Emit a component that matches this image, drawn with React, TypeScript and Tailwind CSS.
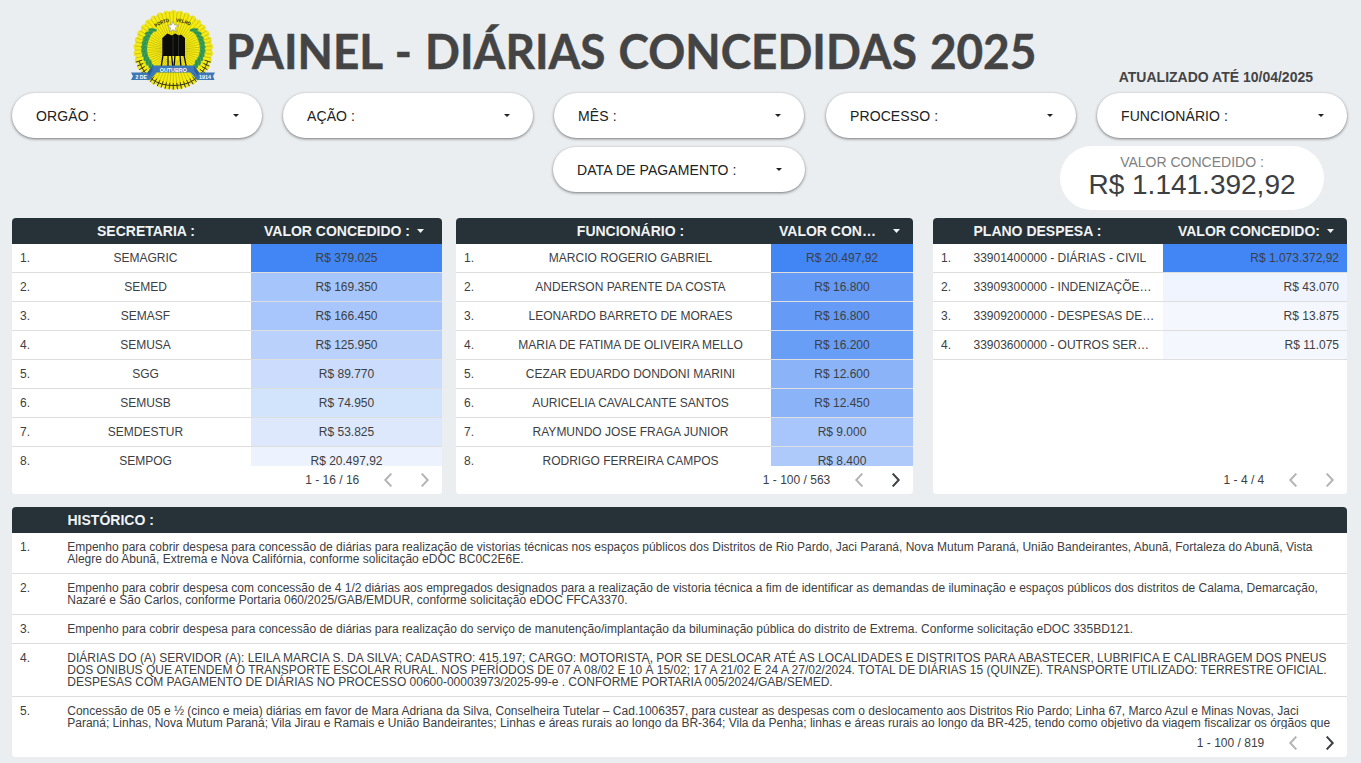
import type { ReactNode } from "react";

type Row = { name: string; value: string; tone: string };

const secretarias: Row[] = [
  { name: "SEMAGRIC", value: "R$ 379.025", tone: "bg-[#4285f4]" },
  { name: "SEMED", value: "R$ 169.350", tone: "bg-[#a6c5fa]" },
  { name: "SEMASF", value: "R$ 166.450", tone: "bg-[#a8c6fb]" },
  { name: "SEMUSA", value: "R$ 125.950", tone: "bg-[#b9d1fb]" },
  { name: "SGG", value: "R$ 89.770", tone: "bg-[#ccdcfc]" },
  { name: "SEMUSB", value: "R$ 74.950", tone: "bg-[#d2e3fc]" },
  { name: "SEMDESTUR", value: "R$ 53.825", tone: "bg-[#dee8fd]" },
  { name: "SEMPOG", value: "R$ 20.497,92", tone: "bg-[#edf3fe]" },
];

const funcionarios: Row[] = [
  { name: "MARCIO ROGERIO GABRIEL", value: "R$ 20.497,92", tone: "bg-[#4285f4]" },
  { name: "ANDERSON PARENTE DA COSTA", value: "R$ 16.800", tone: "bg-[#659bf6]" },
  { name: "LEONARDO BARRETO DE MORAES", value: "R$ 16.800", tone: "bg-[#659bf6]" },
  { name: "MARIA DE FATIMA DE OLIVEIRA MELLO", value: "R$ 16.200", tone: "bg-[#699ef6]" },
  { name: "CEZAR EDUARDO DONDONI MARINI", value: "R$ 12.600", tone: "bg-[#8ab3f8]" },
  { name: "AURICELIA CAVALCANTE SANTOS", value: "R$ 12.450", tone: "bg-[#8bb4f8]" },
  { name: "RAYMUNDO JOSE FRAGA JUNIOR", value: "R$ 9.000", tone: "bg-[#a8c6fb]" },
  { name: "RODRIGO FERREIRA CAMPOS", value: "R$ 8.400", tone: "bg-[#aecafa]" },
];

const planos: Row[] = [
  { name: "33901400000 - DIÁRIAS - CIVIL", value: "R$ 1.073.372,92", tone: "bg-[#4285f4]" },
  { name: "33909300000 - INDENIZAÇÕE…", value: "R$ 43.070", tone: "bg-[#f0f4fe]" },
  { name: "33909200000 - DESPESAS DE…", value: "R$ 13.875", tone: "bg-[#f4f8fe]" },
  { name: "33903600000 - OUTROS SER…", value: "R$ 11.075", tone: "bg-[#f4f8fe]" },
];

const historico: string[][] = [
  [
    "Empenho para cobrir despesa para concessão de diárias para realização de vistorias técnicas nos espaços públicos dos Distritos de Rio Pardo, Jaci Paraná, Nova Mutum Paraná, União Bandeirantes, Abunã, Fortaleza do Abunã, Vista",
    "Alegre do Abunã, Extrema e Nova Califórnia, conforme solicitação eDOC BC0C2E6E.",
  ],
  [
    "Empenho para cobrir despesa com concessão de 4 1/2 diárias aos empregados designados para a realização de vistoria técnica a fim de identificar as demandas de iluminação e espaços públicos dos distritos de Calama, Demarcação,",
    "Nazaré e São Carlos, conforme Portaria 060/2025/GAB/EMDUR, conforme solicitação eDOC FFCA3370.",
  ],
  [
    "Empenho para cobrir despesa para concessão de diárias para realização do serviço de manutenção/implantação da biluminação pública do distrito de Extrema. Conforme solicitação eDOC 335BD121.",
  ],
  [
    "DIÁRIAS DO (A) SERVIDOR (A): LEILA MARCIA S. DA SILVA; CADASTRO: 415.197; CARGO: MOTORISTA, POR SE DESLOCAR ATÉ AS LOCALIDADES E DISTRITOS PARA ABASTECER, LUBRIFICA E CALIBRAGEM DOS PNEUS",
    "DOS ONIBUS QUE ATENDEM O TRANSPORTE ESCOLAR RURAL. NOS PERÍODOS DE 07 A 08/02 E 10 À 15/02; 17 A 21/02 E 24 A 27/02/2024. TOTAL DE DIÁRIAS 15 (QUINZE). TRANSPORTE UTILIZADO: TERRESTRE OFICIAL.",
    "DESPESAS COM PAGAMENTO DE DIÁRIAS NO PROCESSO 00600-00003973/2025-99-e . CONFORME PORTARIA 005/2024/GAB/SEMED.",
  ],
  [
    "Concessão de 05 e ½ (cinco e meia) diárias em favor de Mara Adriana da Silva, Conselheira Tutelar – Cad.1006357, para custear as despesas com o deslocamento aos Distritos Rio Pardo; Linha 67, Marco Azul e Minas Novas, Jaci",
    "Paraná; Linhas, Nova Mutum Paraná; Vila Jirau e Ramais e União Bandeirantes; Linhas e áreas rurais ao longo da BR-364; Vila da Penha; linhas e áreas rurais ao longo da BR-425, tendo como objetivo da viagem fiscalizar os órgãos que",
  ],
];

function Caret({ size = "h-1 w-[7px]", className = "" }: { size?: string; className?: string }) {
  return (
    <svg viewBox="0 0 7 4" preserveAspectRatio="none" className={`shrink-0 ${size} ${className}`} fill="currentColor">
      <path d="M0 0h7L3.5 4z" />
    </svg>
  );
}

function Filter({ label, width = "w-[250px]" }: { label: string; width?: string }) {
  return (
    <button
      className={`flex h-[45px] shrink-0 items-center justify-between rounded-full bg-white pr-[23.5px] pl-6 text-sm text-[#212121] shadow-[0_1px_3px_rgba(0,0,0,0.5)] ${width}`}
    >
      <span className="whitespace-nowrap tracking-[0.1px]">{label}</span>
      <Caret size="h-[3px] w-1.5" />
    </button>
  );
}

const RAYS = Array.from({ length: 60 }, (_, i) => (i * Math.PI * 2) / 60);
const PETALS = Array.from({ length: 34 }, (_, i) => ((i + 0.5) * Math.PI * 2) / 34);
const LEAVES = [
  [21.5, 21, 20],
  [18, 24, 0],
  [15.5, 28, -20],
  [14, 32, -30],
  [13, 36, -40],
  [12.7, 40, -50],
  [13.2, 44, -60],
  [14.5, 48, -65],
  [16.5, 52, -70],
  [19, 55, -75],
];

function Crest() {
  return (
    <svg viewBox="0 0 84 82" className="h-[82px] w-[84px] shrink-0" fontFamily="Liberation Sans, sans-serif">
      {PETALS.map((a) => (
        <circle key={a} cx={42.3 + 36.3 * Math.cos(a)} cy={41 + 36.3 * Math.sin(a)} r="3.6" fill="#eee428" />
      ))}
      <circle cx="42.3" cy="41" r="37" fill="#f6ec0e" />
      {RAYS.map((a) => (
        <path
          key={a}
          d={`M${42.3 + 11 * Math.cos(a)} ${41 + 11 * Math.sin(a)}L${42.3 + 38.5 * Math.cos(a)} ${41 + 38.5 * Math.sin(a)}`}
          stroke="#8f881c"
          strokeWidth="0.4"
        />
      ))}
      {RAYS.filter((a) => a > 0.3 && a < 2.85).map((a) => (
        <path
          key={a}
          d={`M${42.3 + 33 * Math.cos(a)} ${41 + 33 * Math.sin(a)}L${42.3 + 39.5 * Math.cos(a)} ${41 + 39.5 * Math.sin(a)}`}
          stroke="#33320f"
          strokeWidth="0.9"
        />
      ))}
      <path d="M8 52Q17 76.500 42.3 76.500Q68 76.500 77 52" fill="none" stroke="#33320f" strokeWidth="1" />
      <path d="M24 60Q6 42 22 20M61 60Q79 42 63 20" fill="none" stroke="#2a9350" strokeWidth="3" />
      {LEAVES.map(([x, y, r]) => (
        <g key={y} fill="#2a9350" stroke="#a5cf7a" strokeWidth="0.25">
          <ellipse cx={x} cy={y} rx="4.4" ry="1.8" transform={`rotate(${r - 15} ${x} ${y})`} />
          <ellipse cx={84.6 - x} cy={y} rx="4.4" ry="1.8" transform={`rotate(${15 - r} ${84.6 - x} ${y})`} />
        </g>
      ))}
      <path id="crest-left" d="M25 18.500Q31 13.500 39.500 13" fill="none" />
      <path id="crest-right" d="M45 13Q53 13 60.500 18" fill="none" />
      <g fontSize="5" fontWeight="700" fill="#1c1c1c">
        <text>
          <textPath href="#crest-left" textLength="14.5" lengthAdjust="spacingAndGlyphs">PORTO</textPath>
        </text>
        <text>
          <textPath href="#crest-right" textLength="14.5" lengthAdjust="spacingAndGlyphs">VELHO</textPath>
        </text>
      </g>
      <path d="M42 12.300l1.500 3.700 4 .3-3.100 2.600 1 3.900-3.400-2.100-3.400 2.100 1-3.900-3.100-2.600 4-.3z" fill="#fff" stroke="#8a8a8a" strokeWidth="0.6" />
      <path d="M31.300 29l5-4.500 4.700 2 3-2 4 2 2-1 4 3.500v18H31.300z" fill="#0b0b0a" />
      <path d="M32 46l-2 13M37 46v13M40.500 46l1.500 13M44 46l-1 13M49 46l1 13M53 46l2.500 13" stroke="#0b0b0a" strokeWidth="1.3" />
      <path d="M42 27v20M47.500 27v20" stroke="#4d4d46" strokeWidth="0.5" />
      <path d="M0 63.500h16.500l5-7h41.500l5 7H84l-2 3.700 1.500 3.800H66l-6.500-7.500h-34L19 71H0l2-3.800z" fill="#3c77b6" />
      <path d="M16.500 63.500l5-7v5L18 67zM68 63.500l-5-7v5l3.500 5.500z" fill="#2a5f9c" />
      <text x="42.300" y="62.500" textAnchor="middle" fontSize="5.6" fontWeight="700" fill="#fff" textLength="27" lengthAdjust="spacingAndGlyphs">
        OUTUBRO
      </text>
      <text x="4.500" y="69.500" fontSize="5.6" fontWeight="700" fill="#fff" textLength="11.5" lengthAdjust="spacingAndGlyphs">2 DE</text>
      <text x="68" y="69.500" fontSize="5.600" fontWeight="700" fill="#fff" textLength="12" lengthAdjust="spacingAndGlyphs">1914</text>
    </svg>
  );
}

function Chevron({ dir, active = false }: { dir: "left" | "right"; active?: boolean }) {
  return (
    <svg viewBox="0 0 10 14" className={`mb-px h-3.5 w-2.5 ${active ? "text-[#3c4043]" : "text-[#b4b5b6]"}`} fill="none" stroke="currentColor" strokeWidth="2">
      <path d={dir === "left" ? "M8.3 0.6L2.3 7l6 6.4" : "M1.7 0.6L7.7 7l-6 6.4"} />
    </svg>
  );
}

function Pager({ text, next = false }: { text: string; next?: boolean }) {
  return (
    <div className="flex h-7 shrink-0 items-center justify-end bg-white pr-3">
      <span className="mr-[23.75px]">{text}</span>
      <Chevron dir="left" />
      <span className="w-[27px]" />
      <Chevron dir="right" active={next} />
    </div>
  );
}

function Panel({ className, header, children, pager }: { className: string; header: ReactNode; children: ReactNode; pager: ReactNode }) {
  return (
    <section className={`flex flex-col overflow-hidden rounded bg-white ${className}`}>
      <div className="flex h-[26px] shrink-0 items-center bg-[#263238] text-sm font-bold whitespace-nowrap text-[#f1f3f4]">{header}</div>
      <div className="min-h-0 flex-1 overflow-hidden">{children}</div>
      {pager}
    </section>
  );
}

function Rows({ rows, indexWidth, valueWidth, plain = false }: { rows: Row[]; indexWidth: string; valueWidth: string; plain?: boolean }) {
  return (
    <>
      {rows.map((r, i) => (
        <div key={r.name} className="flex h-[29px] border-b border-[#dedede] whitespace-nowrap">
          <div className={`flex items-center pl-2 ${indexWidth}`}>{i + 1}.</div>
          <div className={`flex min-w-0 flex-1 items-center ${plain ? "" : "justify-center"}`}>{r.name}</div>
          <div className={`flex items-center ${valueWidth} ${r.tone} ${plain ? "justify-end pr-2" : "justify-center"}`}>{r.value}</div>
        </div>
      ))}
    </>
  );
}

export default function App() {
  return (
    <main className="flex h-[763px] w-[1361px] flex-col overflow-hidden bg-[#eaeef1] pr-3.5 pl-3 font-['Liberation_Sans',Arial,sans-serif] text-xs text-[#3c4043]">
      <header className="flex h-[93px] shrink-0 items-start">
        <div className="ml-[119px] pt-[9px]">
          <Crest />
        </div>
        <h1 className="ml-[11px] w-[860px] origin-left scale-x-[0.956] pt-[21px] font-['Lato',sans-serif] text-[48px] leading-[60px] font-bold [word-spacing:2px] whitespace-nowrap text-[#444444] [-webkit-text-stroke:0.5px_#444444]">
          PAINEL - DIÁRIAS CONCEDIDAS 2025
        </h1>
        <p className="ml-auto pt-[67px] pr-[34px] text-sm leading-5 font-bold whitespace-nowrap text-[#444444]">ATUALIZADO ATÉ 10/04/2025</p>
      </header>

      <div className="grid shrink-0 grid-cols-[271px_271px_272px_271px_250px]">
        <Filter label="ORGÃO :" />
        <Filter label="AÇÃO :" />
        <Filter label="MÊS :" />
        <Filter label="PROCESSO :" />
        <Filter label="FUNCIONÁRIO :" />
      </div>

      <div className="flex h-20 shrink-0 items-start pt-2">
        <div className="ml-[541px] pt-px">
          <Filter label="DATA DE PAGAMENTO :" width="w-[252px]" />
        </div>
        <div className="mr-[23px] ml-auto flex h-16 w-[264px] flex-col items-center rounded-[32px] bg-white pt-2">
          <span className="text-sm leading-4 text-[#808080]">VALOR CONCEDIDO :</span>
          <span className="text-[28px] leading-[30px]">R$ 1.141.392,92</span>
        </div>
      </div>

      <div className="flex h-[276px] shrink-0">
        <Panel
          className="w-[430px]"
          header={
            <>
              <span className="ml-[29px] w-[210px] text-center">SECRETARIA :</span>
              <span className="flex flex-1 items-center pl-[13px]">
                VALOR CONCEDIDO :<Caret className="ml-[7px]" />
              </span>
            </>
          }
          pager={<Pager text="1 - 16 / 16" />}
        >
          <Rows rows={secretarias} indexWidth="w-7" valueWidth="w-[191px]" />
        </Panel>
        <Panel
          className="ml-3.5 w-[457px]"
          header={
            <>
              <span className="ml-[34px] w-[281px] text-center">FUNCIONÁRIO :</span>
              <span className="flex flex-1 items-center justify-between pr-[13px] pl-2">
                VALOR CON…
                <Caret />
              </span>
            </>
          }
          pager={<Pager text="1 - 100 / 563" next />}
        >
          <Rows rows={funcionarios} indexWidth="w-[34px]" valueWidth="w-[142px]" />
        </Panel>
        <Panel
          className="ml-5 w-[414px]"
          header={
            <>
              <span className="ml-[40.5px] flex-1">PLANO DESPESA :</span>
              <span className="flex items-center pr-[13px]">
                VALOR CONCEDIDO:
                <Caret className="ml-[7px]" />
              </span>
            </>
          }
          pager={<Pager text="1 - 4 / 4" />}
        >
          <Rows rows={planos} indexWidth="w-[40.5px]" valueWidth="w-[184px]" plain />
        </Panel>
      </div>

      <Panel className="mt-[13px] h-[250px] shrink-0" header={<span className="ml-[55.5px]">HISTÓRICO :</span>} pager={<Pager text="1 - 100 / 819" next />}>
        {historico.map((lines, i) => (
          <div key={i} className="flex border-b border-[#dedede] py-2 leading-3 whitespace-nowrap">
            <span className="w-[55.25px] shrink-0 pl-2">{i + 1}.</span>
            <div>
              {lines.map((l) => (
                <p key={l}>{l}</p>
              ))}
            </div>
          </div>
        ))}
      </Panel>
    </main>
  );
}
